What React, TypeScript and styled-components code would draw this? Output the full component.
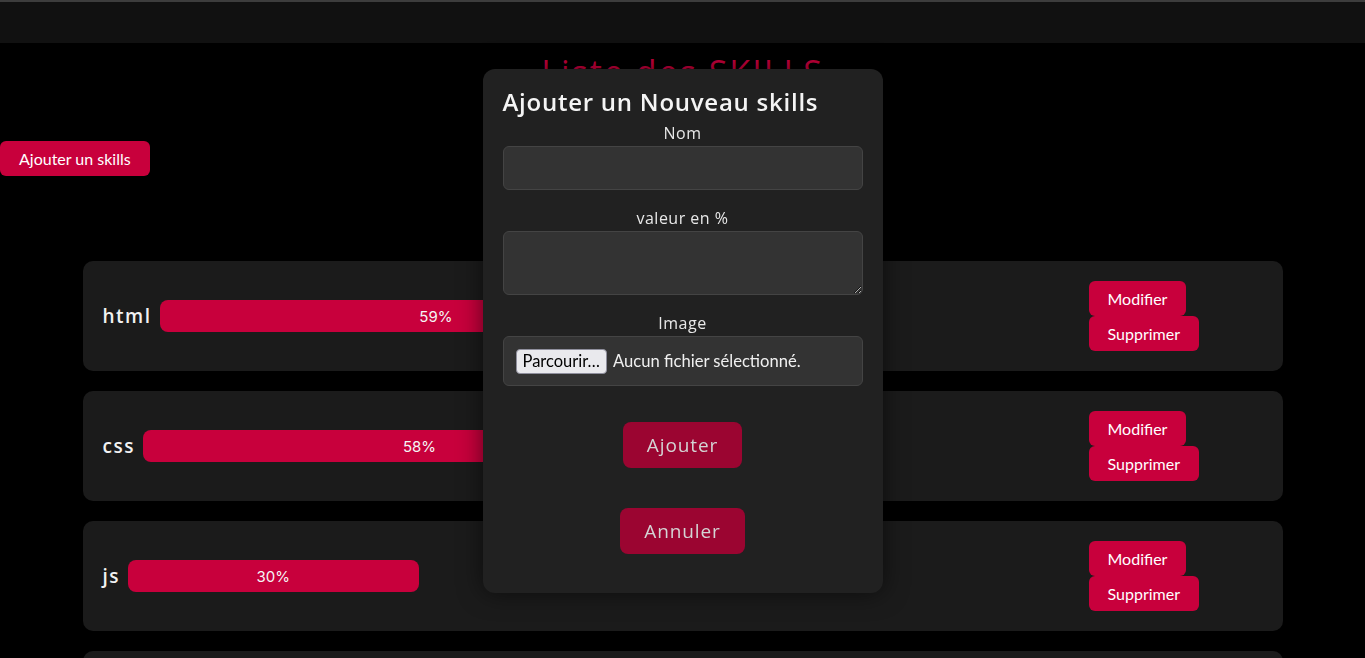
import React from "react";
import styled, { createGlobalStyle } from "styled-components";

const GlobalStyle = createGlobalStyle`
  * { box-sizing: border-box; }
  body {
    margin: 0;
    background: #000;
    font-family: "Open Sans", sans-serif;
    color: #fff;
  }
`;

const RED = "#c8003c";
const HEAD = `"Open Sans", "DejaVu Sans", sans-serif`;
const UI = `"Lato", "Noto Sans", sans-serif`;

const Navbar = styled.header`
  height: 43px;
  border-top: 2px solid #3d3d3d;
  background: #111111;
`;

const Title = styled.h1`
  margin: 5px 0 0;
  text-align: center;
  font-family: ${HEAD};
  font-weight: 500;
  font-size: 34px;
  letter-spacing: 2px;
  line-height: 48px;
  color: ${RED};
`;

const AddButton = styled.button`
  display: block;
  margin-top: 45px;
  height: 35px;
  padding: 0 19px;
  border: none;
  border-radius: 6px;
  background: ${RED};
  color: #fff;
  font-family: ${UI};
  font-size: 16px;
`;

const List = styled.section`
  width: 1200px;
  margin: 85px auto 0;
  display: flex;
  flex-direction: column;
  gap: 20px;
  padding-bottom: 40px;
`;

const Card = styled.article`
  height: 110px;
  padding: 0 20px;
  display: grid;
  grid-template-columns: minmax(0, 1fr) 174px;
  align-items: center;
  background: #1b1b1b;
  border-radius: 10px;
`;

const SkillInfo = styled.div`
  width: 994px;
  display: flex;
  align-items: center;
  gap: 8px;
`;

const SkillName = styled.span`
  font-family: ${HEAD};
  font-weight: 600;
  font-size: 19px;
  letter-spacing: 1.5px;
  color: #f2f2f2;
`;

const Track = styled.div`
  flex: 1;
  min-width: 0;
`;

const Bar = styled.div`
  height: 32px;
  border-radius: 8px;
  background: ${RED};
  display: flex;
  align-items: center;
  justify-content: center;
  font-family: "Inter", sans-serif;
  font-size: 15px;
  color: #f5f5f5;
`;

const Actions = styled.div`
  display: flex;
  flex-direction: column;
  align-items: flex-start;
`;

const SmallButton = styled.button`
  height: 35px;
  padding: 0 19px;
  border: none;
  border-radius: 6px;
  background: ${RED};
  color: #fff;
  font-family: ${UI};
  font-size: 16px;
`;

const Modal = styled.div`
  position: fixed;
  top: 69px;
  left: 50%;
  transform: translateX(-50%);
  width: 400px;
  padding: 19px 20px 39px;
  background: #212121;
  border-radius: 12px;
  box-shadow: 0 0 24px rgba(0, 0, 0, 0.55);
  display: flex;
  flex-direction: column;
`;

const ModalTitle = styled.h2`
  margin: 0;
  font-family: ${HEAD};
  font-weight: 600;
  font-size: 24px;
  letter-spacing: 0.75px;
  line-height: 28px;
  color: #f4f4f4;
`;

const Field = styled.label<{ $gap: number }>`
  display: flex;
  flex-direction: column;
  align-items: stretch;
  margin-top: ${(p) => p.$gap}px;
`;

const FieldLabel = styled.span`
  text-align: center;
  font-family: ${HEAD};
  font-size: 16px;
  letter-spacing: 0.5px;
  line-height: 22px;
  color: #e8e8e8;
  margin-bottom: 2px;
`;

const TextInput = styled.input`
  height: 44px;
  background: #333;
  border: 1px solid #444;
  border-radius: 6px;
  color: #fff;
  padding: 0 10px;
  font-size: 15px;
`;

const TextArea = styled.textarea`
  height: 64px;
  background: #333;
  border: 1px solid #444;
  border-radius: 6px;
  color: #fff;
  padding: 8px 10px;
  font-size: 15px;
  resize: vertical;
`;

const FileBox = styled.div`
  height: 50px;
  background: #333;
  border: 1px solid #444;
  border-radius: 6px;
  padding: 0 12px;
  display: flex;
  align-items: center;
  gap: 6px;
`;

const BrowseButton = styled.span`
  height: 25px;
  padding: 0 6px;
  display: inline-flex;
  align-items: center;
  background: #e9e9ed;
  border: 1px solid #8f8f9d;
  border-radius: 4px;
  color: #000;
  font-family: ${UI};
  font-size: 16.5px;
`;

const FileText = styled.span`
  font-family: ${UI};
  font-size: 16.6px;
  color: #f0f0f0;
`;

const ModalButton = styled.button<{ $top: number }>`
  align-self: center;
  margin-top: ${(p) => p.$top}px;
  height: 46px;
  padding: 0 24px;
  border: none;
  border-radius: 8px;
  background: #9b0531;
  color: #d4d4d4;
  font-family: ${HEAD};
  font-size: 19px;
  letter-spacing: 0.9px;
`;

const skills = [
  { name: "html", value: 59 },
  { name: "css", value: 58 },
  { name: "js", value: 30 },
  { name: "php", value: 45 },
];

export default function App() {
  return (
    <>
      <GlobalStyle />
      <Navbar />
      <Title>Liste des SKILLS</Title>
      <AddButton>Ajouter un skills</AddButton>
      <List>
        {skills.map((s) => (
          <Card key={s.name}>
            <SkillInfo>
              <SkillName>{s.name}</SkillName>
              <Track>
                <Bar style={{ width: `${s.value}%` }}>{s.value}%</Bar>
              </Track>
            </SkillInfo>
            <Actions>
              <SmallButton>Modifier</SmallButton>
              <SmallButton>Supprimer</SmallButton>
            </Actions>
          </Card>
        ))}
      </List>
      <Modal>
        <ModalTitle>Ajouter un Nouveau skills</ModalTitle>
        <Field $gap={6}>
          <FieldLabel>Nom</FieldLabel>
          <TextInput type="text" />
        </Field>
        <Field $gap={17}>
          <FieldLabel>valeur en %</FieldLabel>
          <TextArea />
        </Field>
        <Field $gap={17}>
          <FieldLabel>Image</FieldLabel>
          <FileBox>
            <BrowseButton>Parcourir…</BrowseButton>
            <FileText>Aucun fichier sélectionné.</FileText>
          </FileBox>
        </Field>
        <ModalButton $top={36}>Ajouter</ModalButton>
        <ModalButton $top={40}>Annuler</ModalButton>
      </Modal>
    </>
  );
}
